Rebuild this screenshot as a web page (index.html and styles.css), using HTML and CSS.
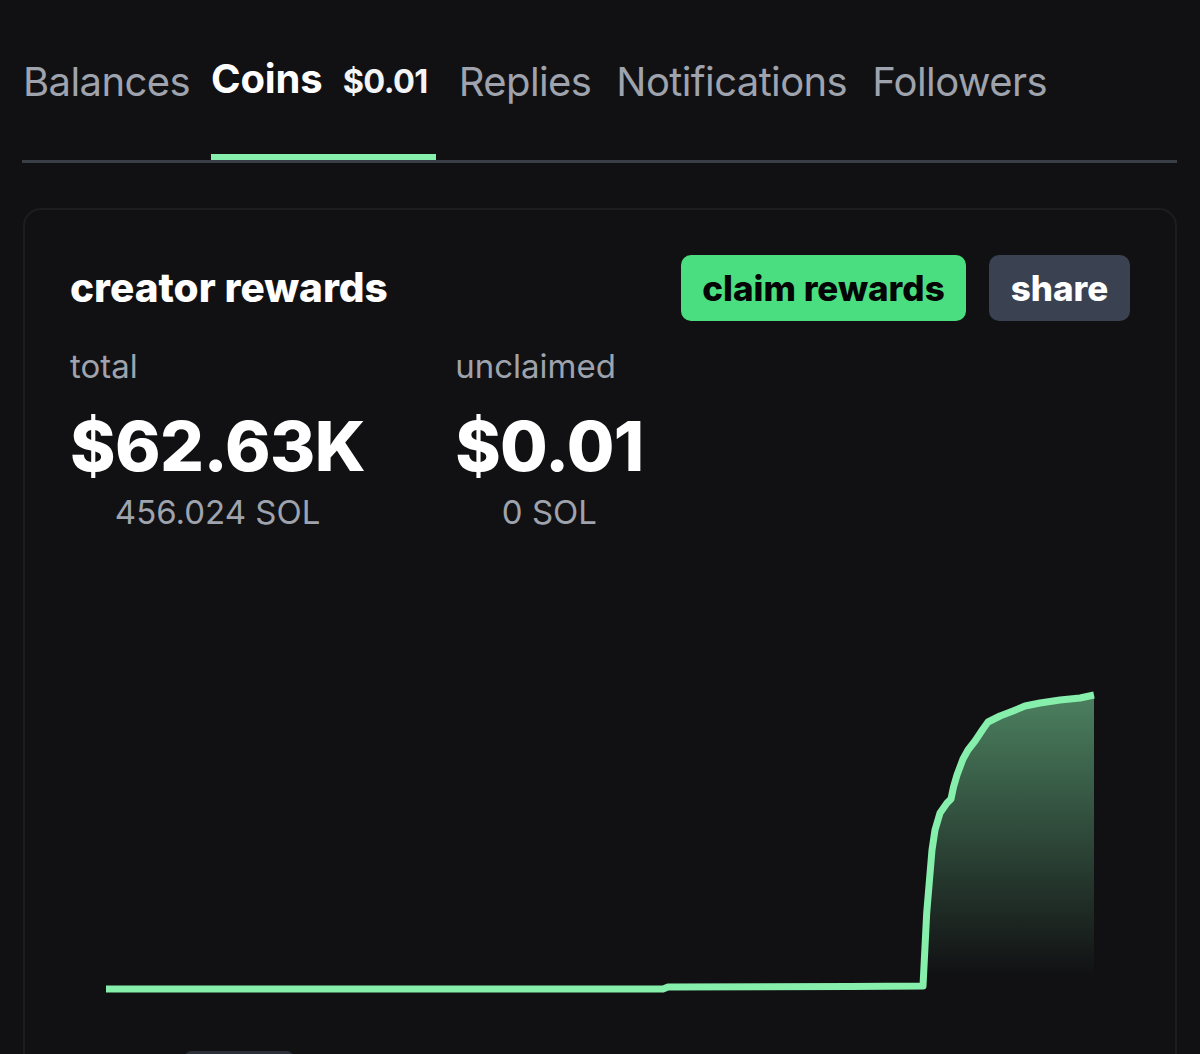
FILE: index.html
```html
<!DOCTYPE html>
<html lang="en">
<head>
<meta charset="utf-8">
<title>Coins</title>
<link rel="stylesheet" href="styles.css">
</head>
<body>
<div class="page">
  <nav class="tabs">
    <a class="tab">Balances</a>
    <a class="tab active">Coins <span class="badge">$0.01</span></a>
    <a class="tab">Replies</a>
    <a class="tab">Notifications</a>
    <a class="tab">Followers</a>
  </nav>

  <section class="card">
    <header class="card-head">
      <h2 class="title">creator rewards</h2>
      <div class="actions">
        <button class="btn btn-claim">claim rewards</button>
        <button class="btn btn-share">share</button>
      </div>
    </header>

    <div class="stats">
      <div class="stat">
        <div class="stat-label">total</div>
        <div class="stat-value">$62.63K</div>
        <div class="stat-sub">456.024 SOL</div>
      </div>
      <div class="stat">
        <div class="stat-label">unclaimed</div>
        <div class="stat-value">$0.01</div>
        <div class="stat-sub">0 SOL</div>
      </div>
    </div>

    <svg class="chart" width="1060" height="460" viewBox="0 0 1060 460">
      <defs>
        <linearGradient id="fillGrad" x1="0" y1="135" x2="0" y2="415" gradientUnits="userSpaceOnUse">
          <stop offset="0" stop-color="#86efac" stop-opacity="0.5"/>
          <stop offset="1" stop-color="#86efac" stop-opacity="0"/>
        </linearGradient>
      </defs>
      <path fill="url(#fillGrad)" d="M36,429 L410,429 L593,429 L598,427 L780,426.5 L853,426 L856.7,353 L862,290 L865,270 L870,253 L877,243 L881,239 L883.5,227 L887,215 L893,199 L898,190 L905,181 L913,169 L918,162 L930,156 L943,151 L955,146 L970,143 L990,140 L1010,138 L1024,135 L1024,429 Z"/>
      <path fill="none" stroke="#86efac" stroke-width="7" stroke-linejoin="round" stroke-linecap="butt" d="M36,429 L410,429 L593,429 L598,427 L780,426.5 L853,426 L856.7,353 L862,290 L865,270 L870,253 L877,243 L881,239 L883.5,227 L887,215 L893,199 L898,190 L905,181 L913,169 L918,162 L930,156 L943,151 L955,146 L970,143 L990,140 L1010,138 L1024,135"/>
    </svg>

    <div class="range">
      <span class="range-pill"></span>
    </div>
  </section>
</div>
</body>
</html>
```

FILE: styles.css
```css
* { box-sizing: border-box; }

html, body {
  margin: 0;
  padding: 0;
  background: #111113;
  height: 100%;
  overflow: hidden;
}

body {
  font-family: Inter, "Noto Sans", sans-serif;
  color: #ffffff;
}

.page {
  padding: 54px 23px 0 22px;
}

.tabs {
  display: flex;
  align-items: flex-end;
  gap: 18px;
  border-bottom: 3px solid #3a3f47;
}

.tab {
  display: flex;
  align-items: baseline;
  gap: 20px;
  font-size: 40px;
  line-height: 50px;
  letter-spacing: -0.6px;
  color: #9ea3ad;
  padding: 0 7px 47px 0;
  border-bottom: 6px solid transparent;
  white-space: nowrap;
}

.tab:first-child {
  padding-left: 1px;
}

.tab.active {
  color: #ffffff;
  font-weight: 700;
  letter-spacing: -0.1px;
  border-bottom-color: #86efac;
  margin-left: -4px;
  margin-right: 5px;
  padding-right: 8px;
}

.badge {
  font-size: 32.5px;
  font-weight: 700;
  letter-spacing: -0.6px;
  color: #f3f4f6;
}

.card {
  margin-top: 45px;
  margin-left: 1px;
  border: 2px solid #1c1d20;
  border-radius: 18px;
  padding: 45px 45px 0 45px;
  height: 900px;
}

.card-head {
  display: flex;
  align-items: center;
  justify-content: space-between;
  height: 66px;
}

.title {
  margin: 0;
  font-size: 40.5px;
  line-height: 48px;
  font-weight: 800;
  letter-spacing: 0;
}

.actions {
  display: flex;
  gap: 23px;
}

.btn {
  font-family: inherit;
  border: 0;
  border-radius: 10px;
  height: 66px;
  font-size: 35px;
  font-weight: 800;
  letter-spacing: 0;
  padding: 0;
  cursor: pointer;
}

.btn-claim {
  background: #4ade80;
  color: #050505;
  width: 285px;
}

.btn-share {
  background: #3a4150;
  color: #ffffff;
  width: 141px;
}

.stats {
  display: flex;
  gap: 90px;
  margin-top: 26px;
}

.stat {
  display: flex;
  flex-direction: column;
}

.stat-label {
  font-size: 33px;
  line-height: 38px;
  color: #9ea3ad;
}

.stat-value {
  margin-top: 28px;
  font-size: 69px;
  line-height: 66px;
  font-weight: 800;
  letter-spacing: -0.6px;
}

.stat-sub {
  margin-top: 14px;
  font-size: 33px;
  line-height: 38px;
  color: #9ea3ad;
  text-align: center;
}

.chart {
  display: block;
  margin-top: 29px;
}

.range {
  margin-top: 31px;
  padding-left: 115px;
}

.range-pill {
  display: block;
  width: 108px;
  height: 20px;
  border-radius: 6px;
  background: #2a2f38;
}
```
